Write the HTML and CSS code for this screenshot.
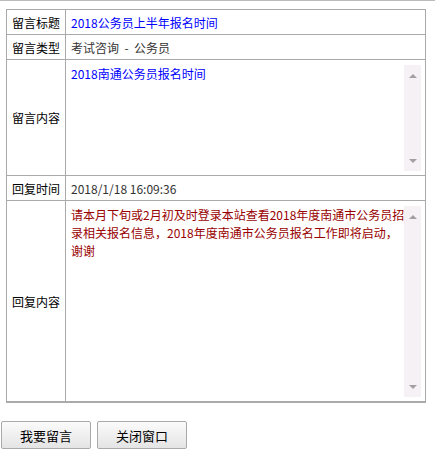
FILE: index.html
```html
<!DOCTYPE html>
<html lang="zh-CN">
<head>
  <meta charset="UTF-8" />
  <title>留言详情</title>
  <link rel="stylesheet" href="styles.css">
</head>
<body>
<div class="topline"></div>

<table class="detail">
  <tr class="r-short">
    <td class="lbl">留言标题</td>
    <td class="val blue">2018公务员上半年报名时间</td>
  </tr>
  <tr class="r-short">
    <td class="lbl">留言类型</td>
    <td class="val">考试咨询 &nbsp;- &nbsp;公务员</td>
  </tr>
  <tr>
    <td class="lbl">留言内容</td>
    <td class="val box-cell">
      <div class="box box-ask">
        <div class="box-text blue">2018南通公务员报名时间</div>
        <div class="sbar"><span class="up"></span><span class="down"></span></div>
      </div>
    </td>
  </tr>
  <tr class="r-short">
    <td class="lbl">回复时间</td>
    <td class="val">2018/1/18 16:09:36</td>
  </tr>
  <tr>
    <td class="lbl">回复内容</td>
    <td class="val box-cell">
      <div class="box box-reply">
        <div class="box-text red">请本月下旬或2月初及时登录本站查看2018年度南通市公务员招<br>录相关报名信息，2018年度南通市公务员报名工作即将启动，<br>谢谢</div>
        <div class="sbar"><span class="up"></span><span class="down"></span></div>
      </div>
    </td>
  </tr>
</table>

<div class="actions">
  <button class="btn">我要留言</button>
  <button class="btn">关闭窗口</button>
</div>
</body>
</html>
```

FILE: styles.css
```css
html,body{margin:0;padding:0;background:#fff;color:#000;font-family:"Noto Sans CJK SC","Liberation Sans",sans-serif;font-size:12px;}
.topline{height:0;border-top:1px solid #bbb;}
.detail{border-collapse:collapse;margin:8px 0 0 6px;width:420px;}
.detail td{border:1px solid #aaa;padding:0 5px;vertical-align:middle;}
.detail tr:last-child td{border-bottom:2px solid #aaa;}
.r-short td{height:24px;}
.lbl{width:47px;white-space:nowrap;color:#000;}
.val{color:#333;}
.blue{color:#0000ff;}
.red{color:#990000;}
.box-cell{padding:5px 4px 4px 3px !important;}
.box{display:flex;}
.box-ask{height:106px;}
.box-reply{height:191px;}
.box-text{flex:1;padding:0 0 0 2px;line-height:18px;white-space:nowrap;overflow:hidden;}
.sbar{width:17px;background:#f5f1f5;display:flex;flex-direction:column;justify-content:space-between;align-items:center;padding:9px 0 8px;box-sizing:border-box;}
.up{width:0;height:0;border-left:4px solid transparent;border-right:4px solid transparent;border-bottom:4px solid #a3a0a3;}
.down{width:0;height:0;border-left:4px solid transparent;border-right:4px solid transparent;border-top:4px solid #a3a0a3;}
.actions{display:flex;gap:6px;margin:18px 0 0 1px;}
.btn{width:90px;height:28px;border:1px solid #aaa;border-radius:2px;background:linear-gradient(#fbfbfb,#e4e4e4);font-family:inherit;font-size:13px;color:#000;padding:0;}
```
